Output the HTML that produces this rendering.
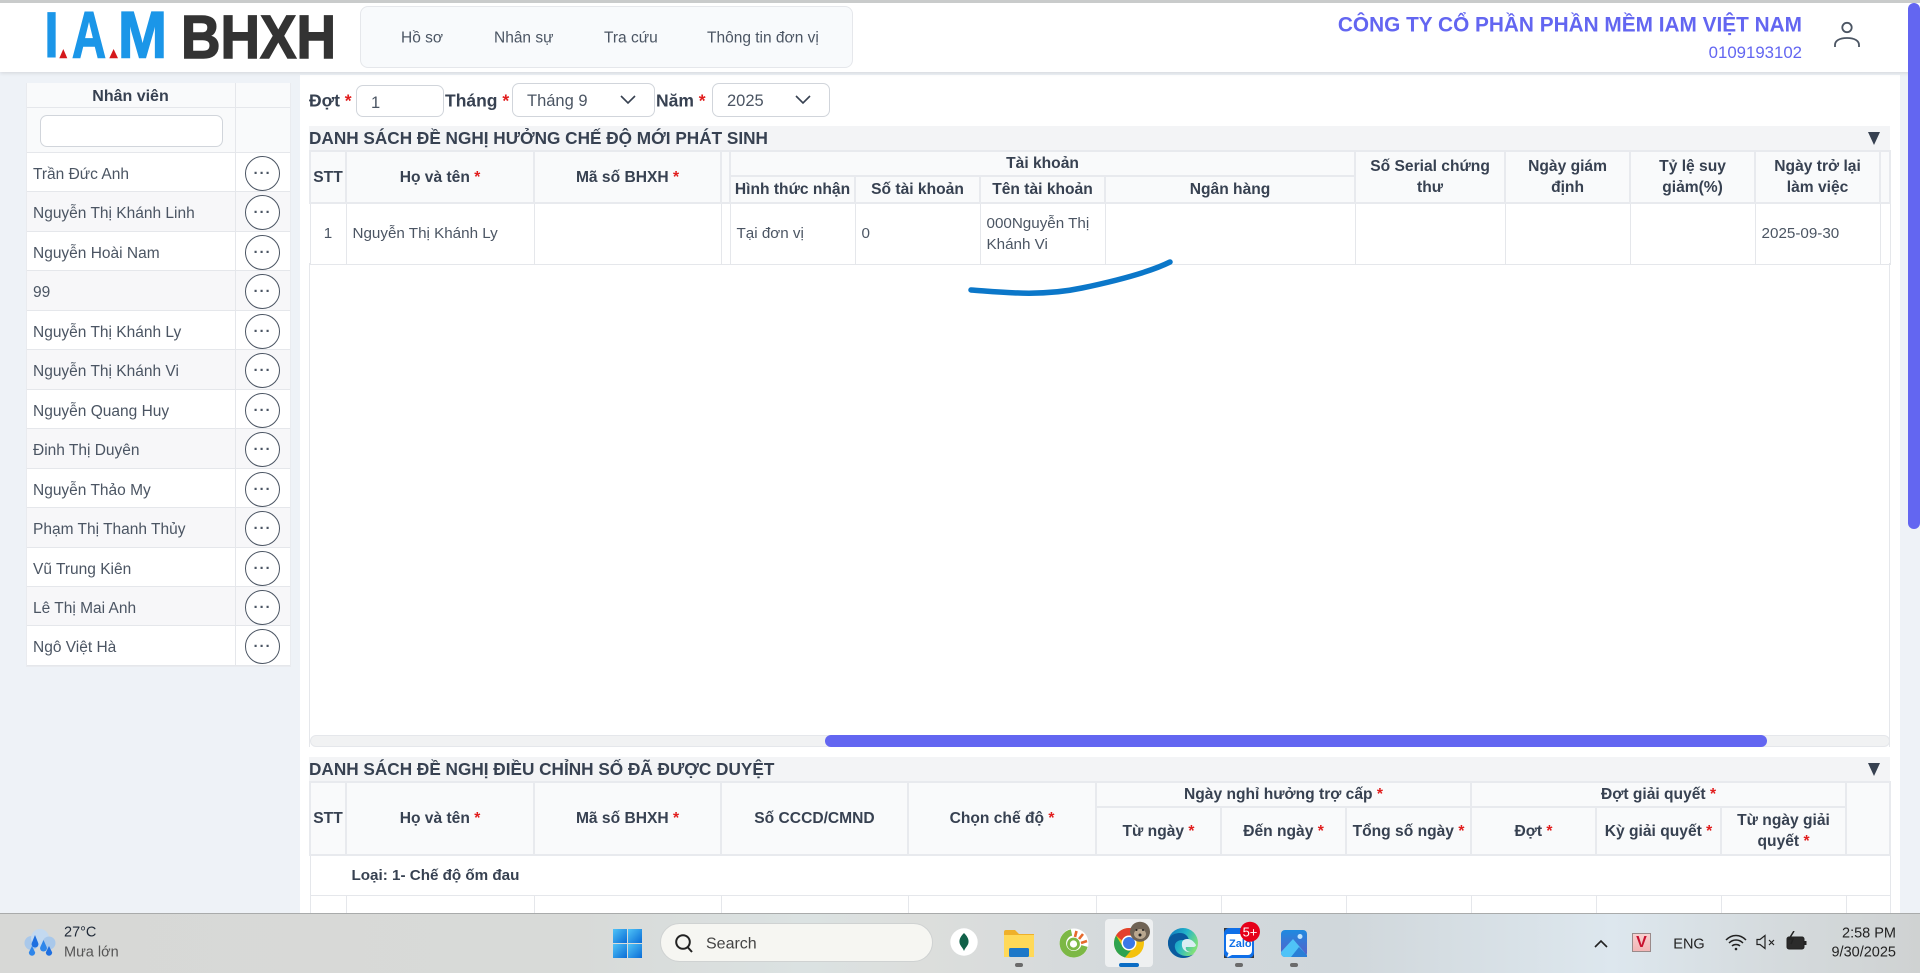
<!DOCTYPE html>
<html lang="vi">
<head>
<meta charset="utf-8">
<title>I.A.M BHXH</title>
<style>
*{box-sizing:border-box}
html,body{margin:0;padding:0;width:1920px;height:973px;overflow:hidden;background:#eef2f7;font-family:"Liberation Sans","Noto Sans CJK SC",sans-serif;color:#374151}
.a{position:absolute}
.tl{position:absolute;white-space:nowrap;transform:translateY(-50%);line-height:1.2}
.tc{position:absolute;white-space:nowrap;transform:translate(-50%,-50%);line-height:1.2}
.tr{position:absolute;white-space:nowrap;transform:translateY(-50%);line-height:1.2;text-align:right}
header{position:absolute;left:0;top:0;width:1920px;height:72px;background:#fff;border-top:3px solid #c9cbcb;box-shadow:0 1px 4px rgba(0,0,0,.12);z-index:2}
nav{position:absolute;left:360px;top:3px;width:493px;height:62px;background:#f8fafc;border:1px solid #e5e7eb;border-radius:8px}
.nv{font-size:15.5px;color:#4b5563}
.co{right:118px;font-size:20.8px;font-weight:700;color:#6366f1}
.tax{right:118px;font-size:16.8px;color:#6366f1}
#scroll{position:absolute;left:1908px;top:3px;width:12px;height:526px;background:#6366f1;border-radius:6px;z-index:3}
#sb{position:absolute;left:26px;top:83px;width:265px;background:#fff;border:1px solid #e9ebef;border-top:0;font-size:15.5px;color:#4b5563}
#sb .h1{height:25px;background:#f9fafb;border-bottom:1px solid #e5e7eb;font-weight:700;font-size:16px;color:#374151;text-align:center;line-height:27px;padding-right:56px;position:relative}
#sb .h2{height:45px;background:#f9fafb;border-bottom:1px solid #e5e7eb;position:relative}
#sb .h2 i{position:absolute;left:13px;top:7px;width:183px;height:32px;background:#fff;border:1px solid #d1d5db;border-radius:7px}
#sb .v{position:absolute;left:208px;top:0;bottom:0;width:1px;background:#e5e7eb}
.row{height:39.46px;border-bottom:1px solid #e5e7eb;position:relative;padding-left:6px;line-height:43px;white-space:nowrap}
.row:nth-child(even){background:#f7f7f9}
.row b{position:absolute;left:218px;top:3px;width:35px;height:35px;border:1px solid #4b5563;border-radius:50%;background:#fff;font-weight:700;font-size:15px;line-height:33px;text-align:center;letter-spacing:1px;color:#4b5563}
#main{position:absolute;left:300px;top:75px;width:1600px;height:840px;background:#fff}
.lb{font-size:17.5px;font-weight:700;color:#374151;top:101px}
.lb s,th s{color:#e11d1d;text-decoration:none;font-weight:700}
.inp{position:absolute;background:#fff;border:1px solid #d1d5db;border-radius:7px;font-size:16.5px;color:#4b5563;padding-left:14px;line-height:34px}
.inp svg{position:absolute;right:18px;top:11px}
.bar{position:absolute;left:309px;width:1581px;height:24px;background:#f3f4f6;font-size:17.2px;font-weight:700;color:#374151;line-height:25px;white-space:nowrap}
.bar u{position:absolute;left:1559px;top:6px;width:0;height:0;border-left:6.5px solid transparent;border-right:6.5px solid transparent;border-top:13px solid #374151;text-decoration:none}
table{position:absolute;left:309px;border-collapse:collapse;table-layout:fixed}
th{background:#f9fafb;border:2px solid #e8eaee;font-weight:700;color:#374151;padding:0;line-height:21px;text-align:center;font-size:15.6px}
td{border:1px solid #e5e7eb;color:#4b5563;padding:0 6px;line-height:21px;font-size:15.2px;overflow:hidden}
#taskbar{position:absolute;left:0;top:913px;width:1920px;height:60px;border-top:1px solid #a9abab;background:linear-gradient(90deg,#d7d8d6 0,#d8dad8 30%,#dbe2e2 42%,#dcdedc 48%,#d4d9dc 58%,#d0d7db 70%,#dde7ee 84%,#d5dbde 92%,#cfd2d2 100%);z-index:4;font-size:14.5px;color:#1f2937}
#search{position:absolute;left:660px;top:9px;width:273px;height:39px;background:#f6f6f2;border:1px solid #cfd2d2;border-radius:20px}
.dot{position:absolute;top:49px;width:8px;height:4px;border-radius:2px;background:#6b6b6b}
</style>
</head>
<body>
<header>
<svg class="a" style="left:0;top:-3px" width="350" height="72" viewBox="0 0 350 72" font-family="Liberation Sans" font-weight="700">
<text x="43.5" y="57.7" font-size="65.5" fill="#1b96e8" textLength="16" lengthAdjust="spacingAndGlyphs">I</text>
<text x="72" y="57.7" font-size="65.5" fill="#1b96e8" stroke="#1b96e8" stroke-width="1.5" textLength="34" lengthAdjust="spacingAndGlyphs">A</text>
<text x="118" y="57.7" font-size="65.5" fill="#1b96e8" stroke="#1b96e8" stroke-width="1.5" textLength="49" lengthAdjust="spacingAndGlyphs">M</text>
<polygon points="59.3,58.3 67.3,58.3 63.3,49" fill="#d5181c"/>
<polygon points="109.3,58.3 118,58.3 113.6,49" fill="#d5181c"/>
<text x="181" y="57.8" font-size="61" fill="#333" stroke="#333" stroke-width="1.4" textLength="155" lengthAdjust="spacingAndGlyphs">BHXH</text>
</svg>
<nav></nav>
<div class="tl nv" style="left:401px;top:36px">Hồ sơ</div>
<div class="tl nv" style="left:494px;top:36px">Nhân sự</div>
<div class="tl nv" style="left:604px;top:36px">Tra cứu</div>
<div class="tl nv" style="left:707px;top:36px">Thông tin đơn vị</div>
<div class="tr co" style="top:22.5px">CÔNG TY CỔ PHẦN PHẦN MỀM IAM VIỆT NAM</div>
<div class="tr tax" style="top:49.5px">0109193102</div>
<svg class="a" style="left:1833px;top:18px" width="28" height="28" viewBox="0 0 28 28" fill="none" stroke="#4b5563" stroke-width="1.8"><circle cx="14" cy="6.5" r="4.7"/><path d="M2 26v-2c0-4 4-7 12-7s12 3 12 7v2"/></svg>
</header>
<div id="scroll"></div>
<div class="a" style="left:1900px;top:72px;width:20px;height:841px;background:#eef2f7"></div>

<aside id="sb">
<div class="h1">Nhân viên</div>
<div class="h2"><i></i></div>
<div id="rows">
<div class="row">Trần Đức Anh<b>···</b></div>
<div class="row">Nguyễn Thị Khánh Linh<b>···</b></div>
<div class="row">Nguyễn Hoài Nam<b>···</b></div>
<div class="row">99<b>···</b></div>
<div class="row">Nguyễn Thị Khánh Ly<b>···</b></div>
<div class="row">Nguyễn Thị Khánh Vi<b>···</b></div>
<div class="row">Nguyễn Quang Huy<b>···</b></div>
<div class="row">Đinh Thị Duyên<b>···</b></div>
<div class="row">Nguyễn Thảo My<b>···</b></div>
<div class="row">Phạm Thị Thanh Thủy<b>···</b></div>
<div class="row">Vũ Trung Kiên<b>···</b></div>
<div class="row">Lê Thị Mai Anh<b>···</b></div>
<div class="row">Ngô Việt Hà<b>···</b></div>
</div>
<span class="v"></span>
</aside>

<div id="main"></div>

<div class="tl lb" style="left:309px">Đợt <s>*</s></div>
<div class="inp" style="left:356px;top:85px;width:88px;height:32px;line-height:35px">1</div>
<div class="tl lb" style="left:445px">Tháng <s>*</s></div>
<div class="inp" style="left:512px;top:83px;width:143px;height:34px">Tháng 9<svg width="16" height="10" viewBox="0 0 16 10" fill="none" stroke="#374151" stroke-width="1.6"><path d="M1 1l7 7 7-7"/></svg></div>
<div class="tl lb" style="left:656px">Năm <s>*</s></div>
<div class="inp" style="left:712px;top:83px;width:118px;height:34px">2025<svg width="16" height="10" viewBox="0 0 16 10" fill="none" stroke="#374151" stroke-width="1.6"><path d="M1 1l7 7 7-7"/></svg></div>

<div class="bar" style="top:126px">DANH SÁCH ĐỀ NGHỊ HƯỞNG CHẾ ĐỘ MỚI PHÁT SINH<u></u></div>
<table style="top:150px;width:1580px">
<colgroup><col style="width:36px"><col style="width:188px"><col style="width:187px"><col style="width:9px"><col style="width:125px"><col style="width:125px"><col style="width:125px"><col style="width:250px"><col style="width:150px"><col style="width:125px"><col style="width:125px"><col style="width:125px"><col style="width:10px"></colgroup>
<tr style="height:25px"><th rowspan="2">STT</th><th rowspan="2">Họ và tên <s>*</s></th><th rowspan="2">Mã số BHXH <s>*</s></th><th style="border-bottom:0"></th><th colspan="4">Tài khoản</th><th rowspan="2">Số Serial chứng<br>thư</th><th rowspan="2">Ngày giám<br>định</th><th rowspan="2">Tỷ lệ suy<br>giảm(%)</th><th rowspan="2">Ngày trở lại<br>làm việc</th><th rowspan="2"></th></tr>
<tr style="height:27px"><th style="border-top:0"></th><th>Hình thức nhận</th><th>Số tài khoản</th><th>Tên tài khoản</th><th>Ngân hàng</th></tr>
<tr style="height:61px"><td style="text-align:center">1</td><td>Nguyễn Thị Khánh Ly</td><td></td><td></td><td>Tại đơn vị</td><td>0</td><td>000Nguyễn Thị Khánh Vi</td><td></td><td></td><td></td><td></td><td>2025-09-30</td><td></td></tr>
</table>
<div class="a" style="left:309px;top:263px;width:1px;height:484px;background:#e5e7eb"></div>
<div class="a" style="left:1889px;top:263px;width:1px;height:484px;background:#e5e7eb"></div>
<svg class="a" style="left:960px;top:255px" width="220" height="50" viewBox="0 0 220 50" fill="none"><path d="M11 35C40 37 80 42 122 33 160 25 190 17 210 7" stroke="#0b77c9" stroke-width="5.5" stroke-linecap="round"/></svg>

<div class="a" style="left:310px;top:735px;width:1580px;height:12px;background:#f1f2f3;border:1px solid #e5e7eb;border-radius:6px"></div>
<div class="a" style="left:825px;top:735px;width:942px;height:12px;background:#6366f1;border-radius:6px"></div>

<div class="bar" style="top:757px">DANH SÁCH ĐỀ NGHỊ ĐIỀU CHỈNH SỐ ĐÃ ĐƯỢC DUYỆT<u></u></div>
<table style="top:781px;width:1580px">
<colgroup><col style="width:36px"><col style="width:188px"><col style="width:187px"><col style="width:187px"><col style="width:188px"><col style="width:125px"><col style="width:125px"><col style="width:125px"><col style="width:125px"><col style="width:125px"><col style="width:125px"><col style="width:44px"></colgroup>
<tr style="height:25px"><th rowspan="2">STT</th><th rowspan="2">Họ và tên <s>*</s></th><th rowspan="2">Mã số BHXH <s>*</s></th><th rowspan="2">Số CCCD/CMND</th><th rowspan="2">Chọn chế độ <s>*</s></th><th colspan="3">Ngày nghỉ hưởng trợ cấp <s>*</s></th><th colspan="3">Đợt giải quyết <s>*</s></th><th rowspan="2"></th></tr>
<tr style="height:48px"><th>Từ ngày <s>*</s></th><th>Đến ngày <s>*</s></th><th>Tổng số ngày <s>*</s></th><th>Đợt <s>*</s></th><th>Kỳ giải quyết <s>*</s></th><th>Từ ngày giải<br>quyết <s>*</s></th></tr>
<tr style="height:40px"><td colspan="12" style="padding-left:41px;font-weight:700;color:#374151;border-bottom:1px solid #e5e7eb">Loại: 1- Chế độ ốm đau</td></tr>
<tr style="height:30px"><td></td><td></td><td></td><td></td><td></td><td></td><td></td><td></td><td></td><td></td><td></td><td></td></tr>
</table>

<footer id="taskbar">
<svg class="a" style="left:24px;top:15px" width="32" height="29" viewBox="0 0 32 29"><circle cx="7.500" cy="14" r="7" fill="#a9c8ea"/><circle cx="16" cy="9" r="9" fill="#c3d9f0"/><circle cx="25" cy="14" r="6.500" fill="#a9c8ea"/><path d="M11 6l3.200 8a3.400 3.400 0 1 1-6.400 0z" fill="#1e6fe0"/><path d="M19.500 11l3.200 7a3.400 3.400 0 1 1-6.400 0z" fill="#2e86ea"/><path d="M8 17l3.200 6.500a3.200 3.200 0 1 1-6.400 0z" fill="#2e86ea"/><path d="M25 17l3.200 6.500a3.200 3.200 0 1 1-6.400 0z" fill="#1e6fe0"/></svg>
<div class="tl" style="left:64px;top:19px;font-size:14.5px">27°C</div>
<div class="tl" style="left:64px;top:39px;font-size:14.5px;color:#555">Mưa lớn</div>
<svg class="a" style="left:613px;top:15px" width="29" height="29" viewBox="0 0 29 29"><defs><linearGradient id="w" x1="0" y1="0" x2="1" y2="1"><stop offset="0" stop-color="#4fc3f7"/><stop offset="1" stop-color="#0a6cd6"/></linearGradient></defs><rect width="14" height="14" fill="url(#w)"/><rect x="15" width="14" height="14" fill="url(#w)"/><rect y="15" width="14" height="14" fill="url(#w)"/><rect x="15" y="15" width="14" height="14" fill="url(#w)"/></svg>
<div id="search">
<svg class="a" style="left:13px;top:9px" width="20" height="21" viewBox="0 0 20 21" fill="none" stroke="#222" stroke-width="2"><circle cx="9" cy="9" r="6.800"/><path d="M13.500 14l4.500 5"/></svg>
<div class="tl" style="left:45px;top:20px;font-size:16px;color:#444">Search</div>
</div>
<svg class="a" style="left:950px;top:14px" width="28" height="28" viewBox="0 0 28 28"><circle cx="14" cy="14" r="13.700" fill="#fff"/><path d="M14 5c3 3 5 6 4.500 9.500S15.500 19 14 23c-1.500-4-4-5-4.500-8.500S11 8 14 5z" fill="#116149"/></svg>
<svg class="a" style="left:1004px;top:16px" width="30" height="27" viewBox="0 0 30 27"><path d="M0 2a2 2 0 0 1 2-2h9l4 4h15v22H0z" fill="#efb02a"/><rect y="5" width="30" height="22" fill="#ffd958"/><rect x="5" y="18" width="20" height="9" rx="1.500" fill="#1d78c8"/></svg>
<svg class="a" style="left:1059px;top:14px" width="30" height="30" viewBox="0 0 30 30" fill="none"><circle cx="15" cy="15" r="14.500" fill="#fff"/><path d="M12.500 4.500A11 11 0 1 0 25.500 18" stroke="#7cb845" stroke-width="6.500"/><circle cx="14.500" cy="16" r="5" fill="#fff" stroke="#7cb845" stroke-width="2.800"/><path d="M16 9l1.500-6M20 11l4-5M22 15l6-2" stroke="#e66a2c" stroke-width="2.600"/></svg>
<div class="a" style="left:1105px;top:5px;width:48px;height:48px;background:#eef0f1;border-radius:4px"></div>
<svg class="a" style="left:1114px;top:7px" width="38" height="39" viewBox="0 -7 38 39"><circle cx="15" cy="15" r="15" fill="#f4c20d"/><path d="M15 0a15 15 0 0 1 13 7.500H15a7.500 7.500 0 0 0-7 5L2 7.500A15 15 0 0 1 15 0z" fill="#e3402f"/><path d="M2 7.500l7 11.500a7 7 0 0 0 8 3.500L11 29.500A15 15 0 0 1 2 7.500z" fill="#2fa34f"/><circle cx="15" cy="15" r="7.500" fill="#fff"/><circle cx="15" cy="15" r="6" fill="#3b78e7"/><circle cx="26" cy="3.700" r="10" fill="#6f6355"/><ellipse cx="26" cy="6" rx="6" ry="5" fill="#b9a78f"/><circle cx="26" cy="7" r="1.500" fill="#222"/><circle cx="22.500" cy="2" r="1" fill="#222"/><circle cx="29" cy="2" r="1" fill="#222"/></svg>
<div class="a" style="left:1119px;top:48.500px;width:20px;height:4px;border-radius:2px;background:#0a6cc4"></div>
<svg class="a" style="left:1168px;top:14px" width="30" height="30" viewBox="0 0 30 30"><defs><linearGradient id="e" x1="0" y1="0" x2="1" y2=".5"><stop offset="0" stop-color="#0d6fbd"/><stop offset=".55" stop-color="#23b5c9"/><stop offset="1" stop-color="#7fe07a"/></linearGradient></defs><circle cx="15" cy="15" r="15" fill="url(#e)"/><path d="M0 15C0 8 6 5 12 5c5 0 8 3 9 7H15C9 12 6 15 7 20c1 5 6 8 12 8 3 0 6-1 8-3-3 3-7 5-12 5C7 30 0 23 0 15z" fill="#0a5a9e"/><path d="M14 15c0-2 2-4 5-4s6 1 9 6c0 1-1 2-3 2H18c-1 2 1 5 5 5-5 1-10-3-9-9z" fill="#d9eef2"/></svg>
<svg class="a" style="left:1224px;top:7px" width="40" height="39" viewBox="0 -7 40 39" font-family="Liberation Sans"><rect width="30" height="30" fill="#383838"/><rect width="30" height="30" rx="5" fill="#0f6fe8"/><path d="M4 6h22a2 2 0 0 1 2 2v15a4 4 0 0 1-4 4H8l-5 2.500 1.500-4.500A4 4 0 0 1 2 21V8a2 2 0 0 1 2-2z" fill="#fff"/><text x="5" y="19" font-size="11" font-weight="700" fill="#0f6fe8">Zalo</text><circle cx="26" cy="3.700" r="10" fill="#e60019"/><text x="26" y="8.500" font-size="13" fill="#fff" text-anchor="middle">5+</text></svg>
<svg class="a" style="left:1281px;top:16px" width="26" height="27" viewBox="0 0 26 27"><defs><linearGradient id="p" x1="0" y1="0" x2="0" y2="1"><stop offset="0" stop-color="#1f8ae0"/><stop offset="1" stop-color="#5a5fc8"/></linearGradient></defs><rect width="26" height="27" rx="4" fill="url(#p)"/><circle cx="19" cy="6.500" r="2.500" fill="#bfe3fb"/><path d="M0 22l12-13 12 14-2 4H4a4 4 0 0 1-4-4z" fill="#4fc3f7"/><path d="M10 27l8-10 8 8v2z" fill="#2a7fd6"/></svg>
<i class="dot" style="left:1015px"></i><i class="dot" style="left:1235px"></i><i class="dot" style="left:1290px"></i>
<svg class="a" style="left:1594px;top:25px" width="14" height="9" viewBox="0 0 14 9" fill="none" stroke="#222" stroke-width="1.600"><path d="M1 8l6-6 6 6"/></svg>
<div class="a" style="left:1632px;top:19px;width:19px;height:19px;background:linear-gradient(#f7d0d0,#f2b5b5);border:1px solid #9a8a8a;color:#c8102e;font-weight:700;font-size:16px;text-align:center;line-height:18px">V</div>
<div class="tc" style="left:1689px;top:31px;font-size:14.500px;color:#222">ENG</div>
<svg class="a" style="left:1725px;top:20px" width="22" height="17" viewBox="0 0 22 17" fill="none" stroke="#222" stroke-width="1.500"><path d="M1 6c6-6 14-6 20 0M4 9c4-4 10-4 14 0M7 12c2-2 6-2 8 0"/><circle cx="11" cy="15" r="1.300" fill="#222" stroke="none"/></svg>
<svg class="a" style="left:1756px;top:20px" width="22" height="17" viewBox="0 0 22 17" fill="none" stroke="#222" stroke-width="1.200"><path d="M1 5.500h3l5-4v13l-5-4H1zM13 6l5 5M18 6l-5 5"/></svg>
<svg class="a" style="left:1786px;top:17px" width="22" height="20" viewBox="0 0 22 20"><rect x="1" y="6" width="17" height="12" rx="2" fill="#2b2b2b" stroke="#222"/><rect x="18.500" y="10" width="2" height="4" fill="#222"/><path d="M8 0L3 8h4L5 13" fill="none" stroke="#222" stroke-width="1.500"/></svg>
<div class="tl" style="right:24px;top:20px;font-size:14.500px;color:#222">2:58 PM</div>
<div class="tl" style="right:24px;top:39px;font-size:14.500px;color:#222">9/30/2025</div>
</footer>
</body>
</html>
